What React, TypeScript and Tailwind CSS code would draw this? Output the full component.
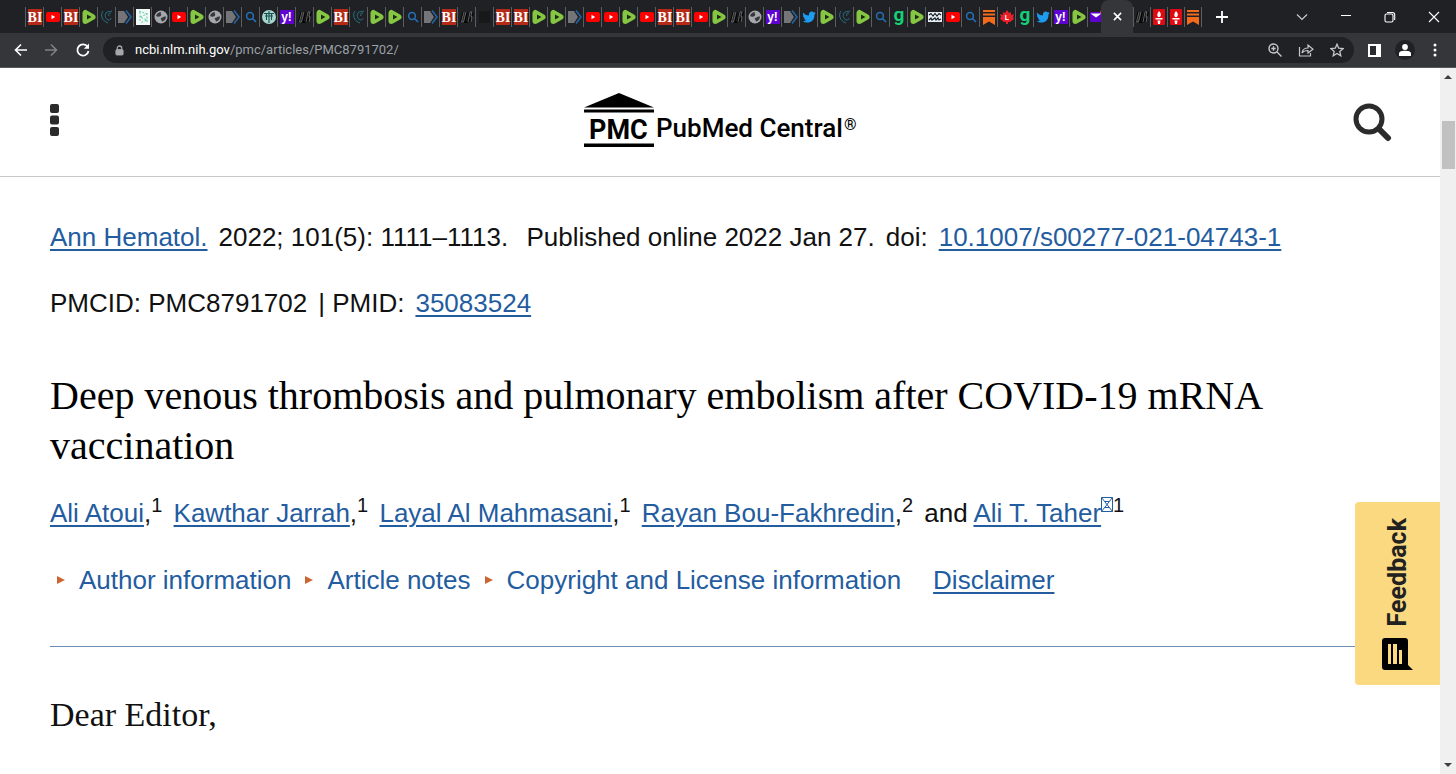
import { ReactNode } from 'react'

type Favicon =
  | 'bi'
  | 'youtube'
  | 'rumble'
  | 'swirl'
  | 'arrow'
  | 'dots'
  | 'globe'
  | 'search'
  | 'medical'
  | 'yahoo'
  | 'slash'
  | 'dark'
  | 'twitter'
  | 'gab'
  | 'grid'
  | 'substack'
  | 'maple'
  | 'mail'
  | 'torch'

const tabs: Favicon[] = [
  'bi', 'youtube', 'bi', 'rumble', 'swirl', 'arrow', 'dots', 'globe', 'youtube', 'rumble',
  'globe', 'arrow', 'search', 'medical', 'yahoo', 'slash', 'rumble', 'bi', 'swirl', 'rumble',
  'rumble', 'search', 'arrow', 'bi', 'slash', 'dark', 'bi', 'bi', 'rumble', 'rumble',
  'arrow', 'youtube', 'youtube', 'rumble', 'youtube', 'bi', 'bi', 'youtube', 'rumble', 'slash',
  'globe', 'yahoo', 'arrow', 'twitter', 'rumble', 'swirl', 'rumble', 'search', 'gab', 'rumble',
  'grid', 'youtube', 'search', 'substack', 'maple', 'gab', 'twitter', 'yahoo', 'rumble', 'mail',
]

const tabsAfter: Favicon[] = ['slash', 'torch', 'torch', 'substack']

const drawings: Record<Favicon, ReactNode> = {
  bi: (
    <>
      <rect width="14" height="16" fill="#b52a17" />
      <text x="7" y="13" textAnchor="middle" fontSize="14" fill="#fff" fontWeight="bold" fontFamily="Liberation Serif, serif">
        BI
      </text>
    </>
  ),
  youtube: (
    <>
      <rect x="0" y="3" width="14" height="10" rx="2" fill="#f00" />
      <path d="M5.500 5.800v4.400L9.200 8z" fill="#fff" />
    </>
  ),
  rumble: (
    <>
      <path d="M3.500 4v8l7-4z" fill="#85c742" stroke="#85c742" strokeWidth="6" strokeLinejoin="round" />
      <path d="M5 5.500v5l4.500-2.500z" fill="#1d2915" />
    </>
  ),
  swirl: (
    <path
      d="M3 2C0 6 2 12 8 14M6 4C4 7 6 11 9 11M6 4c1.500-2 4-1 6-2M11 4c-2 0-3 1-2 3M9 11c1 0 2-1 2-2"
      fill="none"
      stroke="#277382"
    />
  ),
  arrow: (
    <>
      <path d="M0 2h6l4 6-4 6H0z" fill="#737579" />
      <path d="M8 1.500L13 8l-5 6.500" fill="none" stroke="#2464a0" strokeWidth="1.600" />
    </>
  ),
  dots: (
    <>
      <rect width="14" height="16" fill="#f4faf6" />
      <path d="M3 2l8 3-7 3 7 3-7 3M4 3v10M11 4v9" fill="none" stroke="#5fc9ac" strokeDasharray="2 1.500" />
    </>
  ),
  globe: (
    <>
      <circle cx="7" cy="8" r="6.500" fill="#a4a7ab" />
      <path d="M2 7c1-3 3-4 5-4-1 2 1 2 0 3.500S3.500 8 2 7zM7 9c2 0 2-2 5-1.500 0 3-2 4.500-4 5C8 11 6 10 7 9z" fill="#35373a" />
    </>
  ),
  search: (
    <>
      <circle cx="6" cy="7" r="3.400" fill="none" stroke="#2470b8" strokeWidth="1.500" />
      <path d="M8.500 9.500L12 13" stroke="#2470b8" strokeWidth="1.600" />
    </>
  ),
  medical: (
    <>
      <circle cx="7" cy="8" r="7" fill="#a6d5cf" />
      <path d="M2 4.500h10M3 7h8M7 2v12M4.500 4v7M9.500 4v7" fill="none" stroke="#17504d" strokeWidth="1.100" />
    </>
  ),
  yahoo: (
    <>
      <rect y="1" width="14" height="14" fill="#5f01d1" />
      <text x="6.500" y="11.500" textAnchor="middle" fontSize="12" fill="#fff" fontWeight="bold" fontFamily="Liberation Sans, sans-serif">
        y!
      </text>
    </>
  ),
  slash: (
    <>
      <path d="M3.500 3L1 13M7 3L4.500 13h3M10 3L7.500 13M13 3l-1 4M11 9l-1 4" fill="none" stroke="#050505" strokeWidth="2" />
      <path d="M4 3L1.500 13h2L6 3M8 13l2-10h2l-1 4 1 1-1 5" fill="none" stroke="#85878a" strokeWidth=".7" />
    </>
  ),
  dark: <rect x="1" y="2" width="11" height="12" fill="#17181a" />,
  twitter: (
    <path
      d="M1 3.500c1.600 1.900 3.500 2.900 5.800 3 0-2.700 1-4 3-4 .8 0 1.500.4 2 .9l1.700-.6-1 1.500 1.300-.3-1.300 1.400C12.500 10.800 9.500 13.500 5.500 13.500 3.600 13.500 2 13 .7 12.200c1.500.1 2.700-.3 3.800-1.100-1.400-.1-2.200-.8-2.600-1.900h1.100C1.700 8.700.9 7.700.9 6.300l1.200.3C.9 5.800.5 4.800 1 3.500z"
      fill="#1d9bf0"
    />
  ),
  gab: (
    <text x="7" y="12" textAnchor="middle" fontSize="19" fill="#16cf78" fontWeight="bold" fontFamily="Roboto, sans-serif">
      g
    </text>
  ),
  grid: (
    <>
      <rect y="3" width="14" height="10" fill="#e8eef2" />
      <path d="M1 6l2-1.500L5 7l2-2.500L9 7l2-2.500L13 6M1 11l2-2 1 2 3-2 1 2 2-2 1 2 2-1" fill="none" stroke="#16232e" strokeWidth="1.200" />
    </>
  ),
  substack: <path d="M1 1h12v2H1zM1 4.500h12v2H1zM1 8h12v8l-6-3.500L1 16z" fill="#f26b1d" />,
  maple: (
    <>
      <path d="M7 1l2 3 2-1v3l3-1-1 3 1 2-4 3H8v2H6v-2H4L0 10l1-2-1-3 3 1V3l2 1z" fill="#e8202a" />
      <text x="7" y="11" textAnchor="middle" fontSize="7" fill="#fff" fontWeight="bold" fontFamily="Liberation Sans, sans-serif">
        L
      </text>
    </>
  ),
  mail: (
    <>
      <rect x="0" y="3" width="12" height="10" fill="#5f01d1" />
      <path d="M.5 4.500h11L6 8.500z" fill="#fff" />
      <circle cx="11" cy="3" r="1.200" fill="#e0304b" />
    </>
  ),
  torch: (
    <>
      <rect x="1" width="12" height="16" rx="1" fill="#e00b12" />
      <path d="M7 2c2 2 2.500 4 1 6H6C4.500 6 5.500 4 7 2zM3.500 9h7v1.500h-7zM5.500 11.500h3L8 15H6z" fill="#fff" />
    </>
  ),
}

function Tab({ icon }: { icon: Favicon }) {
  return (
    <button type="button" className="flex h-5 w-[18px] items-center justify-center border-l border-[#5b5d61]">
      <svg viewBox="0 0 14 16" className="h-4 w-[14px] shrink-0 overflow-visible">
        {drawings[icon]}
      </svg>
    </button>
  )
}

function TabStrip() {
  return (
    <div className="flex h-[33px] items-center bg-[#202124] pl-[25px] text-white">
      {tabs.map((icon, index) => (
        <Tab key={index} icon={icon} />
      ))}
      <button type="button" aria-label="Close tab" className="-ml-1 flex h-full w-8 items-center justify-center rounded-t-lg bg-[#35363a]">
        <svg viewBox="0 0 10 10" className="size-[9px]" stroke="currentColor" strokeWidth="1.700">
          <path d="M1 1l8 8M9 1L1 9" />
        </svg>
      </button>
      <div className="flex w-[69px] border-r border-[#5b5d61]">
        {tabsAfter.map((icon, index) => (
          <Tab key={index} icon={icon} />
        ))}
      </div>
      <button type="button" aria-label="New tab" className="ml-[14px]">
        <svg viewBox="0 0 12 12" className="size-3" stroke="currentColor" strokeWidth="1.800">
          <path d="M6 0v12M0 6h12" />
        </svg>
      </button>
      <div className="ml-auto flex h-7 items-center gap-8 pr-4">
        <button type="button" aria-label="Search tabs">
          <svg viewBox="0 0 12 12" className="size-3" fill="none" stroke="#d0d1d3" strokeWidth="1.100">
            <path d="M1 3.500l5 5 5-5" />
          </svg>
        </button>
        <button type="button" aria-label="Minimize">
          <svg viewBox="0 0 12 12" className="size-3" stroke="currentColor">
            <path d="M1 4.500h10" />
          </svg>
        </button>
        <button type="button" aria-label="Restore">
          <svg viewBox="0 0 12 12" className="size-3" fill="none" stroke="currentColor" strokeWidth="1.100">
            <rect x="1" y="3" width="8" height="8" rx="1.500" />
            <path d="M3 1.500h5.500a2.200 2.200 0 012.200 2.200V9" />
          </svg>
        </button>
        <button type="button" aria-label="Close">
          <svg viewBox="0 0 12 12" className="size-3" stroke="currentColor" strokeWidth="1.100">
            <path d="M1 1l10 10M11 1L1 11" />
          </svg>
        </button>
      </div>
    </div>
  )
}

function Toolbar() {
  return (
    <div className="flex h-[35px] items-center border-b border-[#58595c] bg-[#35363a] pl-[13px] pr-[15px] text-white">
      <div className="flex gap-[15px]">
        <button type="button" aria-label="Back">
          <svg viewBox="0 0 16 16" className="size-4" fill="none" stroke="currentColor" strokeWidth="1.600">
            <path d="M14 8H2.500M8 2.500L2.500 8 8 13.500" />
          </svg>
        </button>
        <button type="button" aria-label="Forward">
          <svg viewBox="0 0 16 16" className="size-4" fill="none" stroke="#818387" strokeWidth="1.500">
            <path d="M1 8h11.500M7 2.500L12.500 8 7 13.500" />
          </svg>
        </button>
        <button type="button" aria-label="Reload">
          <svg viewBox="0 0 16 16" className="size-4" fill="none" stroke="currentColor" strokeWidth="1.800">
            <path d="M12.600 4.800A5.600 5.600 0 1013.500 9" />
            <path d="M14 1.500v5.200H8.800z" fill="currentColor" stroke="none" />
          </svg>
        </button>
      </div>
      <div className="ml-3 flex h-[26px] flex-1 items-center rounded-full bg-[#202124] pl-3 pr-[10px]">
        <svg viewBox="0 0 10 12" className="mr-[11px] h-[11px] w-[9px]" fill="none" stroke="#a4a7ab">
          <rect x="1" y="5" width="8" height="6" rx="1" fill="#a4a7ab" />
          <path d="M2.500 5V3.500a2.500 2.500 0 015 0V5" strokeWidth="1.400" />
        </svg>
        <a href="https://ncbi.nlm.nih.gov/pmc/articles/PMC8791702/" className="font-['Roboto',sans-serif] text-[13px] text-[#9aa0a6]">
          <span className="text-white">ncbi.nlm.nih.gov</span>/pmc/articles/PMC8791702/
        </a>
        <div className="ml-auto flex gap-4 text-[#c4c6c9]">
          <button type="button" aria-label="Zoom">
            <svg viewBox="0 0 14 14" className="size-[14px]" fill="none" stroke="currentColor" strokeWidth="1.400">
              <circle cx="5.500" cy="5.500" r="4.500" />
              <path d="M9 9l4.500 4.500M3.300 5.500h4.400M5.500 3.300v4.400" />
            </svg>
          </button>
          <button type="button" aria-label="Share">
            <svg viewBox="0 0 16 14" className="h-[14px] w-4" fill="none" stroke="currentColor" strokeWidth="1.200">
              <path d="M1.500 4v9h11v-3" />
              <path d="M4 10c.5-3.500 2.500-5 6-5V2l5 4.200L10 10V7.500c-3 0-4.500.5-6 2.500z" />
            </svg>
          </button>
          <button type="button" aria-label="Bookmark">
            <svg viewBox="0 0 14 14" className="size-[14px]" fill="none" stroke="currentColor" strokeWidth="1.300">
              <path d="M7 1.200l1.700 4 4.400.4-3.300 2.900 1 4.300L7 10.500l-3.800 2.300 1-4.300L.9 5.600l4.400-.4z" />
            </svg>
          </button>
        </div>
      </div>
      <div className="ml-[14px] flex items-center gap-[14px]">
        <button type="button" aria-label="Side panel">
          <svg viewBox="0 0 13 13" className="size-[13px]">
            <path d="M0 0h13v13H0z" fill="#fff" />
            <path d="M2 2h6v9H2z" fill="#2a2b2e" />
          </svg>
        </button>
        <button type="button" aria-label="Profile" className="flex size-5 items-center justify-center rounded-full bg-[#202124]">
          <svg viewBox="0 0 12 12" className="size-3" fill="#fff">
            <circle cx="6" cy="3" r="2.900" />
            <path d="M0 12V9.500C0 7.500 3 6.800 6 6.800s6 .7 6 2.700V12z" />
          </svg>
        </button>
        <button type="button" aria-label="Browser menu" className="flex w-3 justify-center">
          <svg viewBox="0 0 4 14" className="h-[14px] w-1" fill="#fff">
            <circle cx="2" cy="2" r="1.500" />
            <circle cx="2" cy="7" r="1.500" />
            <circle cx="2" cy="12" r="1.500" />
          </svg>
        </button>
      </div>
    </div>
  )
}

function Logo() {
  return (
    <a href="#home" aria-label="PubMed Central">
      <svg viewBox="0 0 274 58" className="h-[58px] w-[274px]" fill="#000">
        <path d="M0 14.500L35 0l35 14.500zM0 16.500h70v3H0zM0 50.500h70V54H0z" />
        <text x="5" y="46" fontSize="27" fontWeight="700" fontFamily="Roboto, sans-serif">
          PMC
        </text>
        <text x="72" y="44" fontSize="26" fontWeight="500" fontFamily="Roboto, sans-serif">
          PubMed Central
        </text>
        <text x="260" y="37" fontSize="16" fontWeight="500" fontFamily="Roboto, sans-serif">
          ®
        </text>
      </svg>
    </a>
  )
}

function SiteHeader() {
  return (
    <header className="grid h-[109px] grid-cols-[1fr_auto_1fr] items-center border-b border-[#c8c8c8] pl-[50px] pr-12">
      <button type="button" aria-label="Menu" className="justify-self-start pb-1">
        <svg viewBox="0 0 9 32" className="h-8 w-[9px]" fill="#2b2b2b">
          <rect width="9" height="9" rx="2" />
          <rect y="11.500" width="9" height="9" rx="2" />
          <rect y="23" width="9" height="9" rx="2" />
        </svg>
      </button>
      <Logo />
      <button type="button" aria-label="Search" className="justify-self-end">
        <svg viewBox="0 0 40 40" className="size-10" fill="none" stroke="#2b2b2b">
          <circle cx="17" cy="17" r="13" strokeWidth="5" />
          <path d="M27 27l9 9" strokeWidth="6" strokeLinecap="round" />
        </svg>
      </button>
    </header>
  )
}

function Link({ children }: { children: ReactNode }) {
  return (
    <a href="#article" className="text-[#235c9f] underline decoration-2 underline-offset-3">
      {children}
    </a>
  )
}

function Sup({ children }: { children: ReactNode }) {
  return <sup className="mr-1 text-xl">{children}</sup>
}

function Toggle({ children }: { children: ReactNode }) {
  return (
    <button type="button" className="flex items-center text-[#235c9f]">
      <svg viewBox="0 0 8 8" className="mr-[14px] size-2" fill="#cc6633">
        <path d="M0 0l8 4-8 4z" />
      </svg>
      {children}
    </button>
  )
}

function Article() {
  return (
    <main className="px-[50px] pt-10 font-['Liberation_Sans',Arial,sans-serif] text-[26px]/10 text-[#111]">
      <div className="flex flex-wrap gap-x-[11px]">
        <Link>Ann Hematol.</Link>
        <span>2022; 101(5): 1111–1113.&nbsp;</span>
        <span>Published online 2022 Jan 27.</span>
        <span>doi:</span>
        <Link>10.1007/s00277-021-04743-1</Link>
      </div>
      <div className="mt-[26px] flex flex-wrap gap-x-[11px]">
        <span>PMCID: PMC8791702</span>
        <span>| PMID:</span>
        <Link>35083524</Link>
      </div>
      <h1 className="mt-12 font-['Liberation_Serif',serif] text-[40px]/[50px] text-black">
        Deep venous thrombosis and pulmonary embolism after COVID-19 mRNA vaccination
      </h1>
      <p className="mt-[22px]">
        <Link>Ali Atoui</Link>,<Sup>1</Sup> <Link>Kawthar Jarrah</Link>,<Sup>1</Sup> <Link>Layal Al Mahmasani</Link>,
        <Sup>1</Sup> <Link>Rayan Bou-Fakhredin</Link>,<Sup>2</Sup> and <Link>Ali T. Taher</Link>
        <Sup>
          <svg viewBox="0 0 12 15" className="inline h-[15px] w-3 align-baseline" fill="none" stroke="#235c9f">
            <path d="M.5.500h11v14H.5zM.5.500l11 14M11.500.500l-11 14M4 4.500h4M4 10.500h4" />
          </svg>
          1
        </Sup>
      </p>
      <div className="mt-[27px] flex gap-[14px] pl-[7px]">
        <Toggle>Author information</Toggle>
        <Toggle>Article notes</Toggle>
        <Toggle>Copyright and License information</Toggle>
        <span className="pl-[18px]">
          <Link>Disclaimer</Link>
        </span>
      </div>
      <hr className="mt-[46px] h-px border-0 bg-[#6b8cb5]" />
      <p className="mt-12 font-['Liberation_Serif',serif] text-[34px]/10">Dear Editor,</p>
    </main>
  )
}

function Feedback() {
  return (
    <button
      type="button"
      className="absolute right-0 top-[434px] flex w-[85px] flex-col items-center gap-3 rounded-l bg-[#fad980] pb-[15px] pt-4 font-['Roboto',sans-serif] text-[25px]/8 font-bold text-[#212121]"
    >
      <span className="rotate-180 [writing-mode:vertical-rl]">Feedback</span>
      <svg viewBox="0 0 32 32" className="size-8">
        <path d="M3 0h20q3 0 3 3v24l5 5H3q-3 0-3-3V3q0-3 3-3z" fill="#000" />
        <path d="M6 6h3v20H6zM11 6h4v20h-4zM17 12h3v14h-3z" fill="#fad980" />
      </svg>
    </button>
  )
}

function Scrollbar() {
  return (
    <div className="flex w-4 shrink-0 flex-col items-center justify-between bg-[#f0f0f0] py-[7px]">
      <div className="flex flex-col items-center gap-[42px]">
        <svg viewBox="0 0 8 4" className="h-1 w-2" fill="#404040">
          <path d="M0 4l4-4 4 4z" />
        </svg>
        <div className="h-12 w-[13px] bg-[#c1c1c1]" />
      </div>
      <svg viewBox="0 0 8 4" className="h-1 w-2" fill="#404040">
        <path d="M0 0h8L4 4z" />
      </svg>
    </div>
  )
}

export default function App() {
  return (
    <div className="flex min-h-screen flex-col bg-white">
      <TabStrip />
      <Toolbar />
      <div className="flex flex-1">
        <div className="relative min-w-0 flex-1">
          <SiteHeader />
          <Article />
          <Feedback />
        </div>
        <Scrollbar />
      </div>
    </div>
  )
}
